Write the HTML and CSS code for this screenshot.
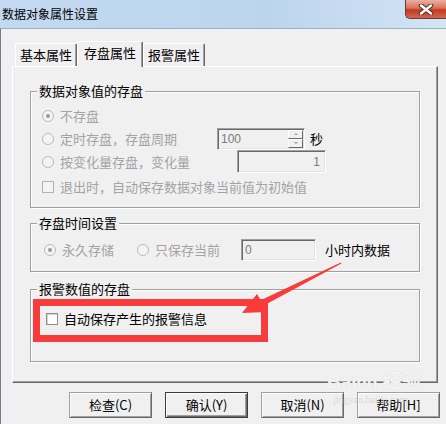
FILE: index.html
```html
<!DOCTYPE html>
<html lang="zh-CN">
<head>
  <meta charset="UTF-8">
  <title>数据对象属性设置</title>
  <link rel="stylesheet" href="styles.css">
</head>
<body>
  <div class="window">
    <div class="titlebar">
      <span class="title">数据对象属性设置</span>
      <div class="close">
        <svg width="16" height="11" viewBox="0 0 16 11">
          <path d="M3 1.5 L13 9.5 M13 1.5 L3 9.5" stroke="#5a2a22" stroke-width="4.5" stroke-linecap="round"/>
          <path d="M3 1.5 L13 9.5 M13 1.5 L3 9.5" stroke="#fff" stroke-width="2.5" stroke-linecap="round"/>
        </svg>
      </div>
    </div>

    <div class="frame">
      <div class="tabs">
        <div class="tab">基本属性</div>
        <div class="tab tab-active">存盘属性</div>
        <div class="tab">报警属性</div>
      </div>

      <div class="panel">
        <div class="group">
          <div class="group-title">数据对象值的存盘</div>
          <div class="group-body g1">
            <div class="row h22">
              <span class="radio on"></span><span class="dim">不存盘</span>
            </div>
            <div class="row h23">
              <span class="opt opt-period"><span class="radio"></span><span class="dim">定时存盘，存盘周期</span></span>
              <div class="edit spin">
                <span class="edit-text">100</span>
                <div class="spin-btns">
                  <span class="spin-btn"><i class="tri-up"></i></span>
                  <span class="spin-btn"><i class="tri-down"></i></span>
                </div>
              </div>
              <span class="unit">秒</span>
            </div>
            <div class="row h23">
              <span class="opt opt-change"><span class="radio"></span><span class="dim">按变化量存盘，变化量</span></span>
              <div class="edit edit-change"><span class="edit-text right">1</span></div>
            </div>
            <div class="row h22 gap-top">
              <span class="check"></span><span class="dim">退出时，自动保存数据对象当前值为初始值</span>
            </div>
          </div>
        </div>

        <div class="group g2-space">
          <div class="group-title">存盘时间设置</div>
          <div class="group-body g2">
            <div class="row h22">
              <span class="opt opt-forever"><span class="radio on"></span><span class="dim">永久存储</span></span>
              <span class="opt opt-keep"><span class="radio"></span><span class="dim">只保存当前</span></span>
              <div class="edit edit-hours"><span class="edit-text">0</span></div>
              <span class="unit unit-hours">小时内数据</span>
            </div>
          </div>
        </div>

        <div class="group g3-space">
          <div class="group-title">报警数值的存盘</div>
          <div class="group-body g3">
            <div class="row h22">
              <span class="check check-on"></span><span>自动保存产生的报警信息</span>
            </div>
          </div>
        </div>
      </div>

      <div class="buttons">
        <div class="btn">检查(C)</div>
        <div class="btn btn-default">确认(Y)</div>
        <div class="btn">取消(N)</div>
        <div class="btn">帮助[H]</div>
      </div>
    </div>

    <!-- annotation drawn over the dialog -->
    <svg class="annot" width="446" height="424" viewBox="0 0 446 424">
      <rect x="36.5" y="302.5" width="228" height="36" fill="none" stroke="#f83b3b" stroke-width="7"/>
      <polygon fill="#f83b3b" points="340.8,262.4 260.6,300.3 257,294 242,313 267,312 263.4,305.7 341.4,263.6"/>
    </svg>

    <div class="watermark">
      <div class="wm-logo">Bai<span class="wm-du">du</span> 经验</div>
      <div class="wm-url">jingyan.baidu.com</div>
    </div>
  </div>
</body>
</html>
```
FILE: styles.css
```css
* { margin: 0; padding: 0; box-sizing: border-box; }

body {
  width: 446px;
  height: 424px;
  overflow: hidden;
  font-family: "Noto Sans CJK SC", "Noto Sans", sans-serif;
  font-size: 13px;
  color: #000;
  background: #f0f0f0;
}

.window {
  position: relative;
  width: 446px;
  height: 424px;
}

/* title bar */
.titlebar {
  height: 28px;
  display: flex;
  justify-content: space-between;
  align-items: flex-start;
  background: linear-gradient(90deg, #c3d9f1, #bcd4ee 60%, #d3e4f5);
}

.title {
  font-size: 12px;
  line-height: 28px;
  padding-left: 2px;
}

.close {
  width: 41px;
  height: 19px;
  border: 1px solid #6a3a30;
  border-top: none;
  border-right: none;
  border-radius: 0 0 0 5px;
  background: linear-gradient(#ebb0a3, #d9725c 45%, #c23a21 55%, #d2674f);
  display: flex;
  align-items: center;
  justify-content: center;
}

/* dialog body */
.frame {
  height: 396px;
  border-top: 1px solid #9fb0c4;
  border-left: 1px solid #6e7e90;
  padding-top: 12px;
}

.tabs {
  display: flex;
  align-items: flex-end;
  height: 25px;
  margin-left: 14px;
}

.tab {
  width: 62px;
  height: 23px;
  line-height: 22px;
  text-align: center;
  border: 1px solid #fff;
  border-right-color: #696969;
  border-bottom: none;
  border-radius: 2px 2px 0 0;
  box-shadow: inset -1px 0 0 #a0a0a0;
  background: #f0f0f0;
}

.tab-active {
  width: 66px;
  height: 26px;
  margin-bottom: -1px;
  position: relative;
  z-index: 1;
}

.panel {
  margin-left: 11px;
  width: 426px;
  height: 317px;
  border: 1px solid;
  border-color: #fff #696969 #696969 #fff;
  box-shadow: inset -1px -1px 0 #a0a0a0;
  padding: 24px 17px 0;
}

/* group boxes */
.group {
  border: 1px solid #a0a0a0;
  box-shadow: inset 1px 1px 0 #fff, 1px 1px 0 #fff;
}

.g2-space { margin-top: 15px; }
.g3-space { margin-top: 17px; }

.group-title {
  width: fit-content;
  margin: -9px 0 0 6px;
  padding: 0 2px;
  line-height: 16px;
  background: #f0f0f0;
}

.g1 { padding: 6px 0 9px 11px; }
.g2 { padding: 8px 0 10px 13px; }
.g3 { padding: 11px 0 31px 15px; }

.row {
  display: flex;
  align-items: center;
  line-height: 16px;
}

.h22 { height: 22px; }
.h23 { height: 23px; }
.gap-top { margin-top: 3px; }

.opt {
  display: flex;
  align-items: center;
}

.opt-period { width: 175px; }
.opt-change { width: 195px; }
.opt-forever { margin-right: 23px; }
.opt-keep { margin-right: 21px; }

.dim { color: #a3a3a3; }

.radio {
  flex: none;
  width: 12px;
  height: 12px;
  margin-right: 6px;
  border-radius: 50%;
  border: 1px solid #b9b9b9;
  background: #f4f4f4;
  display: flex;
  align-items: center;
  justify-content: center;
}

.radio.on::after {
  content: "";
  width: 4px;
  height: 4px;
  border-radius: 50%;
  background: #9a9a9a;
}

.check {
  flex: none;
  width: 12px;
  height: 12px;
  margin-right: 6px;
  border: 1px solid #b1b1b1;
  background: #f4f4f4;
}

.check-on {
  border-color: #8e8f8f;
  background: #fff;
  box-shadow: inset 1px 1px 0 #d4d4d4;
}

/* edit boxes */
.edit {
  height: 22px;
  border: 1px solid;
  border-color: #a0a0a0 #fff #fff #a0a0a0;
  box-shadow: inset 1px 1px 0 #696969, inset -1px -1px 0 #e3e3e3;
  display: flex;
  align-items: center;
  font-family: "Liberation Sans", Arial, sans-serif;
  font-size: 12px;
  color: #7a7a7a;
}

.edit-text {
  flex: 1;
  padding: 0 3px;
}

.right { text-align: right; padding-right: 5px; }

.spin { width: 88px; }
.edit-change { width: 89px; height: 23px; }
.edit-hours { width: 75px; }

.spin-btns {
  display: flex;
  flex-direction: column;
  align-self: stretch;
  padding: 1px 1px 1px 0;
}

.spin-btn {
  width: 15px;
  flex: 1;
  border: 1px solid;
  border-color: #fff #696969 #696969 #fff;
  background: #f0f0f0;
  display: flex;
  align-items: center;
  justify-content: center;
}

.tri-up, .tri-down {
  width: 0;
  height: 0;
  border-left: 2px solid transparent;
  border-right: 2px solid transparent;
}

.tri-up { border-bottom: 2px solid #a0a0a0; }
.tri-down { border-top: 2px solid #a0a0a0; }

.unit { margin-left: 5px; }
.unit-hours { margin-left: 9px; }

/* dialog buttons */
.buttons {
  display: flex;
  gap: 13px;
  margin: 9px 0 0 68px;
}

.btn {
  width: 83px;
  height: 26px;
  border: 1px solid;
  border-color: #a0a0a0 #696969 #696969 #a0a0a0;
  box-shadow: inset 1px 1px 0 #fff, inset -1px -1px 0 #a0a0a0;
  background: #f0f0f0;
  line-height: 24px;
  text-align: center;
}

.btn-default {
  border-color: #3c3c3c;
  box-shadow: inset 1px 1px 0 #fff, inset -1px -1px 0 #696969, inset -2px -2px 0 #a0a0a0;
}

/* overlays */
.annot {
  position: absolute;
  top: 0;
  left: 0;
  pointer-events: none;
}

.watermark {
  position: absolute;
  left: 327px;
  top: 371px;
  color: rgba(255, 255, 255, 0.75);
  text-shadow: 0 0 1px #cfcfcf;
  pointer-events: none;
}

.wm-logo {
  font-family: "Liberation Sans", "Noto Sans CJK SC", sans-serif;
  font-size: 19px;
  font-weight: bold;
  line-height: 22px;
}

.wm-du { font-size: 17px; }

.wm-url {
  font-family: "Liberation Serif", serif;
  font-size: 10px;
  line-height: 12px;
  margin-left: 6px;
  color: rgba(200, 200, 200, 0.6);
  text-shadow: none;
}
```
